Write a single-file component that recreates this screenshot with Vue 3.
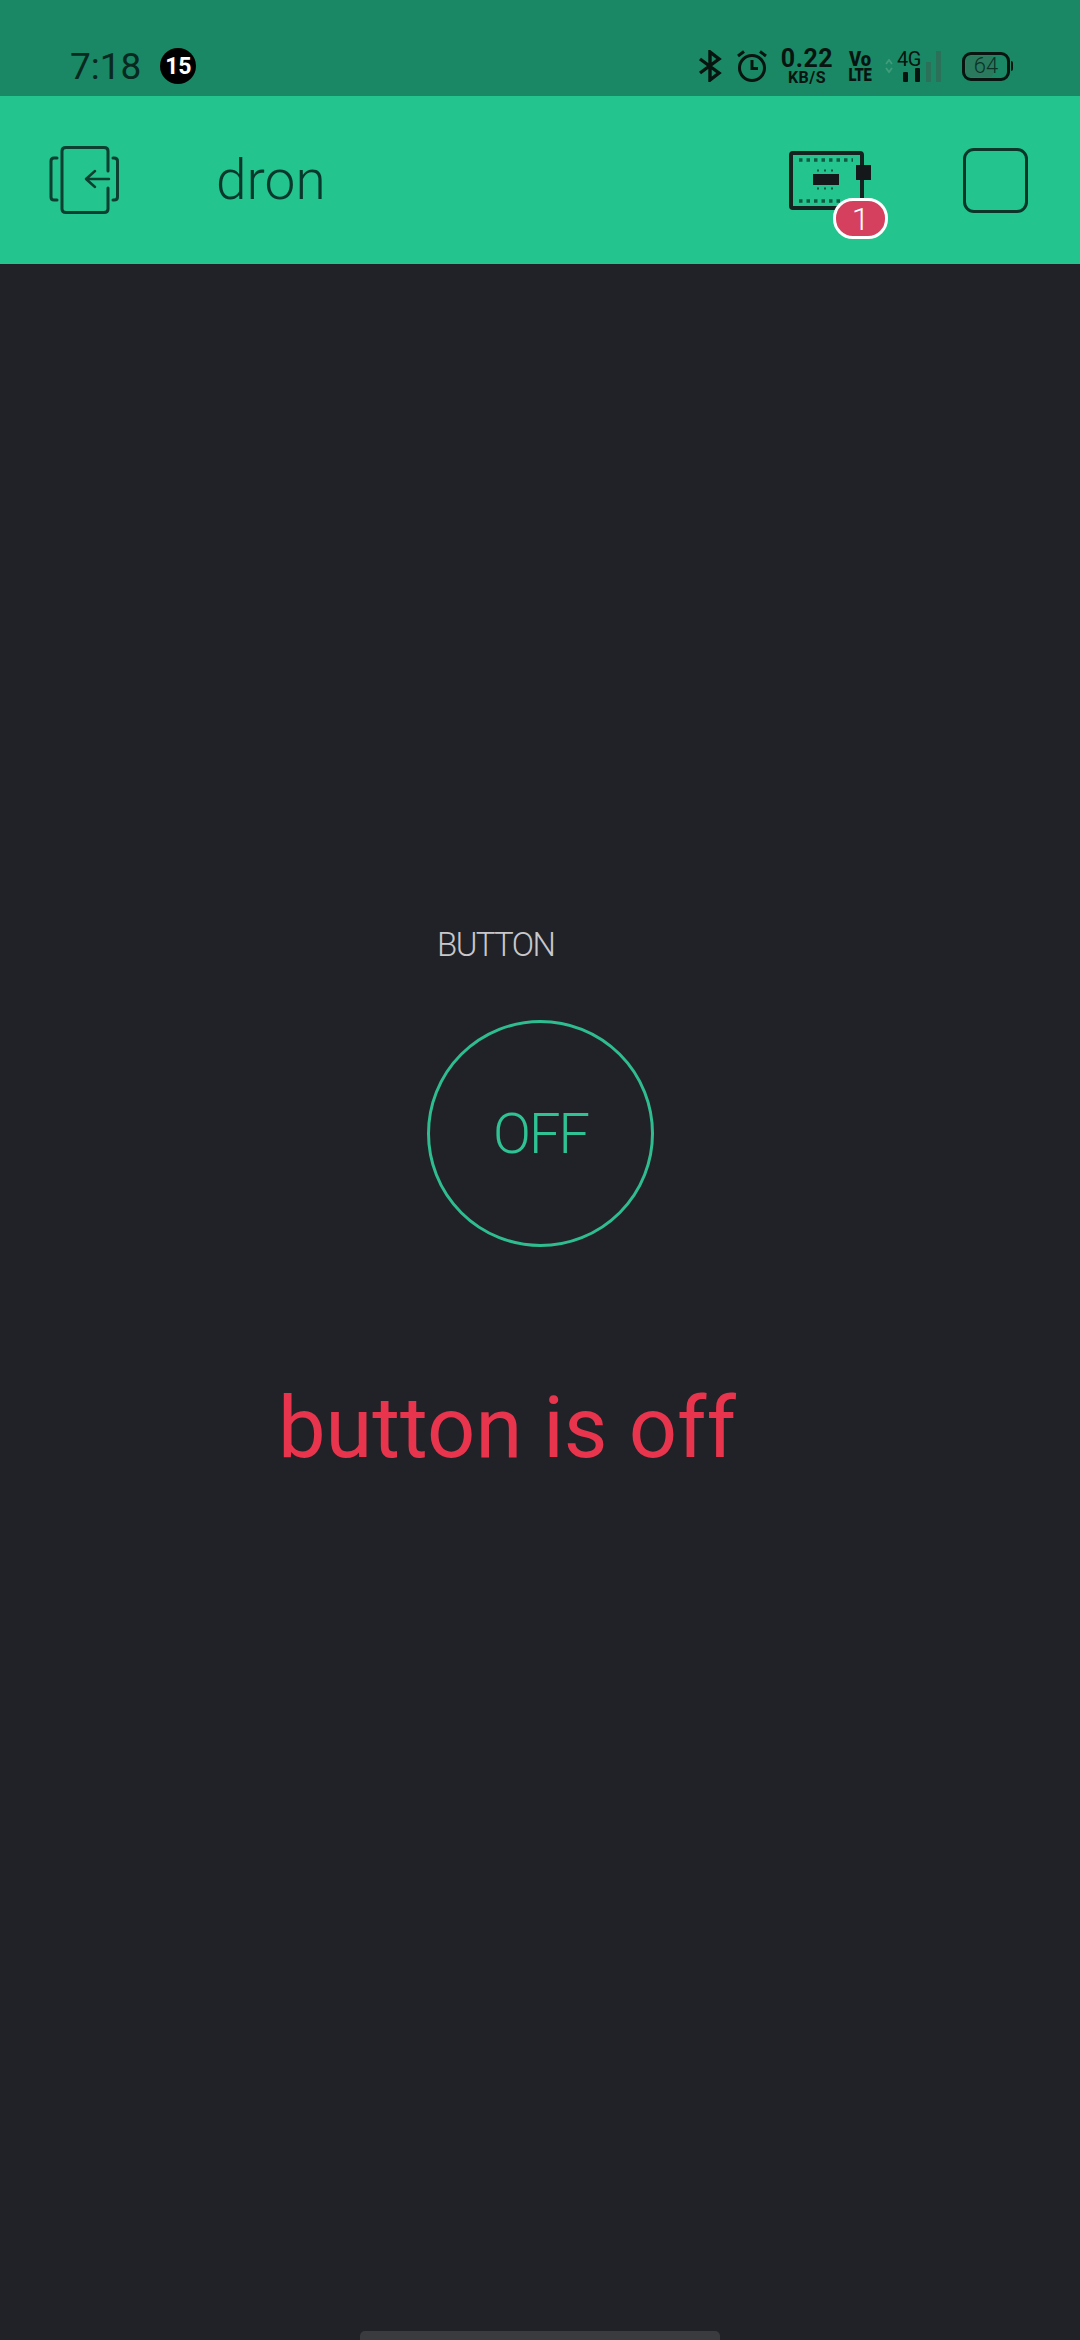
<template>
  <div class="screen">
    <div class="status-bar">
      <span class="time">7:18</span>
      <span class="notif">15</span>
      <div class="status-icons">
        <svg width="24" height="32" viewBox="0 0 24 32" fill="none" stroke="#07140f" stroke-width="3.4">
          <path d="M2 9 L21 23 L12 30 V2 L21 9 L2 23" />
        </svg>
        <svg class="ic-alarm" width="30" height="32" viewBox="0 0 30 32" fill="none" stroke="#07140f" stroke-width="3">
          <circle cx="15" cy="18" r="12.5" />
          <path d="M15 10 V18.500 H21" />
          <path d="M1 6 L7 1.500 M29 6 L23 1.500" />
        </svg>
        <div class="speed">
          <span class="speed-num">0.22</span>
          <span class="speed-unit">KB/S</span>
        </div>
        <div class="volte">
          <span class="vo">Vo</span>
          <span class="lte">LTE</span>
        </div>
        <div class="net">
          <svg class="net-arrows" width="8" height="16" viewBox="0 0 8 16" fill="none" stroke="#3f9c7c" stroke-width="1.800">
            <path d="M1 6 L4 2 L7 6 M1 10 L4 14 L7 10" />
          </svg>
          <div class="net-stack">
            <span class="net-4g">4G</span>
            <svg width="32" height="14" viewBox="0 0 32 14" fill="#07140f"><rect x="6" y="4" width="5" height="10" rx="1" /><rect x="18" y="0" width="5" height="14" rx="1" /></svg>
          </div>
          <svg class="net-bars" width="16" height="31" viewBox="0 0 16 31" fill="#2b7059">
            <rect x="0" y="11" width="5" height="20" /><rect x="10" y="0" width="5" height="31" />
          </svg>
        </div>
        <div class="battery">
          <span class="battery-fill"></span>
          <span class="battery-num">64</span>
        </div>
      </div>
    </div>

    <header class="app-bar">
      <svg width="70" height="68" viewBox="0 0 70 68" fill="none" stroke="#0d3f31" stroke-width="3" stroke-linecap="round" stroke-linejoin="round">
        <path d="M8 12 H5 Q2 12 2 15 V51 Q2 54 5 54 H8" />
        <path d="M64 12 H65 Q68.500 12 68.500 15 V51 Q68.500 54 65 54 H64" />
        <path d="M59 25 V5 Q59 1.500 55 1.500 H17 Q13 1.500 13 5 V63 Q13 66.500 17 66.500 H55 Q59 66.500 59 63 V42" />
        <path d="M60 33 H37 M46 25 L37 33 L46 41" stroke-width="2.500" />
      </svg>
      <h1 class="title">dron</h1>
      <div class="device">
        <svg width="84" height="60" viewBox="0 0 84 60" fill="none">
          <rect x="2" y="2" width="71" height="55" rx="2" stroke="#14231f" stroke-width="4" />
          <path d="M10 9 H64 M10 50 H52" stroke="#0f5a43" stroke-width="3.500" stroke-dasharray="3.500 4" />
          <rect x="24" y="23" width="26" height="11" fill="#14181a" />
          <path d="M28 19.500 H48 M28 37.500 H48" stroke="#0f5a43" stroke-width="2" stroke-dasharray="2 5" />
          <rect x="67" y="14" width="15" height="15" fill="#14181a" />
        </svg>
        <span class="badge">1</span>
      </div>
      <span class="stop"></span>
    </header>

    <main class="canvas">
      <span class="btn-label">BUTTON</span>
      <button class="round-btn">OFF</button>
      <p class="display">button is off</p>
    </main>

    <div class="home-bar"></div>
  </div>
</template>

<script setup>
</script>

<style>
html, body {
  background: #212227;
}
</style>

<style scoped>
.screen {
  width: 1080px;
  height: 2340px;
  display: flex;
  flex-direction: column;
  background: #212227;
  font-family: Roboto, "Liberation Sans", sans-serif;
  overflow: hidden;
  position: relative;
}

.status-bar {
  height: 96px;
  box-sizing: border-box;
  background: #1a8864;
  display: flex;
  align-items: center;
  padding: 40px 0 4px 70px;
}

.time {
  font-size: 37px;
  font-weight: 400;
  color: #08291f;
}

.notif {
  width: 36px;
  height: 36px;
  margin-left: 19px;
  border-radius: 50%;
  background: #000;
  color: #fff;
  font-size: 23px;
  font-weight: 700;
  display: flex;
  align-items: center;
  justify-content: center;
}

.status-icons {
  margin-left: auto;
  display: flex;
  align-items: center;
  color: #07140f;
  padding-right: 70px;
}

.ic-alarm {
  margin-left: 15px;
}

.speed {
  margin-left: 16px;
  width: 48px;
  display: flex;
  flex-direction: column;
  align-items: center;
}

.speed-num {
  font-size: 25px;
  font-weight: 700;
  line-height: 24px;
  letter-spacing: 0.5px;
}

.speed-unit {
  font-size: 16px;
  font-weight: 700;
  line-height: 14px;
  letter-spacing: 0.5px;
}

.volte {
  margin-left: 18px;
  width: 21px;
  display: flex;
  flex-direction: column;
  align-items: center;
  font-weight: 900;
}

.vo {
  font-size: 20px;
  line-height: 16px;
  transform: scaleX(0.92);
}

.lte {
  font-size: 18px;
  line-height: 15px;
  letter-spacing: -0.5px;
  transform: scaleX(0.82);
}

.net {
  margin-left: 15px;
  display: flex;
  align-items: center;
}

.net-arrows {
  margin-right: 4px;
}

.net-stack {
  display: flex;
  flex-direction: column;
  width: 32px;
  margin-right: -3px;
}

.net-4g {
  font-size: 20px;
  font-weight: 400;
  line-height: 17px;
  letter-spacing: -0.5px;
}

.battery {
  margin-left: 20px;
  width: 48px;
  height: 29px;
  box-sizing: border-box;
  border: 3.500px solid #07140f;
  border-radius: 9px;
  position: relative;
  display: flex;
  align-items: center;
  justify-content: center;
}

.battery::after {
  content: "";
  position: absolute;
  right: -6px;
  top: 6px;
  width: 2.500px;
  height: 10px;
  background: #07140f;
  border-radius: 0 2px 2px 0;
}

.battery-fill {
  position: absolute;
  left: 1px;
  top: 1px;
  bottom: 1px;
  width: 27px;
  background: #2a7a5e;
  border-radius: 4px;
}

.battery-num {
  position: relative;
  font-size: 22px;
  font-weight: 300;
  line-height: 22px;
  color: #0b3327;
}

.app-bar {
  height: 168px;
  box-sizing: border-box;
  background: #23c48e;
  display: flex;
  align-items: center;
  padding: 0 52px 0 49px;
}

.title {
  margin: 0 0 0 97px;
  font-size: 55px;
  font-weight: 300;
  color: #08372b;
  flex: 1;
}

.device {
  position: relative;
  width: 84px;
  height: 60px;
  margin: 2px 0 0 0;
}

.badge {
  position: absolute;
  left: 44px;
  top: 47px;
  width: 55px;
  height: 41px;
  box-sizing: border-box;
  border: 3px solid #fff;
  border-radius: 20px;
  background: #d6405f;
  color: #fff;
  font-size: 32px;
  font-weight: 300;
  display: flex;
  align-items: center;
  justify-content: center;
}

.stop {
  width: 65px;
  height: 65px;
  margin-left: 90px;
  box-sizing: border-box;
  border: 3.500px solid #0a3529;
  border-radius: 11px;
}

.canvas {
  flex: 1;
  position: relative;
}

.btn-label {
  position: absolute;
  left: 437px;
  top: 661px;
  font-size: 33px;
  font-weight: 300;
  line-height: 40px;
  letter-spacing: -1.600px;
  color: #c8c8cc;
}

.round-btn {
  position: absolute;
  left: 427px;
  top: 756px;
  width: 227px;
  height: 227px;
  padding: 0;
  border: 3.500px solid #2fbd90;
  border-radius: 50%;
  background: transparent;
  color: #2fc293;
  font-family: inherit;
  font-size: 56px;
  font-weight: 300;
  letter-spacing: -2px;
}

.display {
  position: absolute;
  left: 278px;
  top: 1114px;
  margin: 0;
  font-size: 84.800px;
  line-height: 100px;
  font-weight: 400;
  color: #e8344c;
  white-space: nowrap;
}

.home-bar {
  position: absolute;
  left: 360px;
  bottom: 0;
  width: 360px;
  height: 9px;
  border-radius: 5px 5px 0 0;
  background: #3a3b3f;
}
</style>
